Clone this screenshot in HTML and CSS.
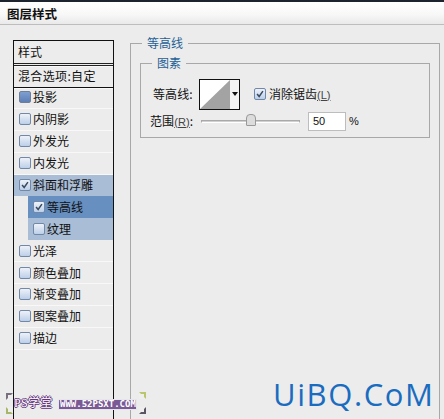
FILE: index.html
```html
<!DOCTYPE html>
<html lang="zh">
<head>
<meta charset="utf-8">
<title>图层样式</title>
<link rel="stylesheet" href="styles.css">
</head>
<body>
<div class="dialog">
  <header class="titlebar">图层样式</header>
  <div class="main">
    <nav class="sidebar">
      <div class="head">样式</div>
      <div class="head blend">混合选项:自定</div>
      <ul class="list">
        <li class="row"><span class="box filled"></span>投影</li>
        <li class="row"><span class="box"></span>内阴影</li>
        <li class="row"><span class="box"></span>外发光</li>
        <li class="row"><span class="box"></span>内发光</li>
        <li class="row soft"><span class="box"><svg viewBox="0 0 12 12"><path d="M2.5 6 L5 9 L9.5 2.5" fill="none" stroke="#3a4a5e" stroke-width="1.8"/></svg></span>斜面和浮雕</li>
        <li class="row sub strong"><span class="box"><svg viewBox="0 0 12 12"><path d="M2.5 6 L5 9 L9.5 2.5" fill="none" stroke="#3a4a5e" stroke-width="1.8"/></svg></span>等高线</li>
        <li class="row sub soft"><span class="box"></span>纹理</li>
        <li class="row"><span class="box"></span>光泽</li>
        <li class="row"><span class="box"></span>颜色叠加</li>
        <li class="row"><span class="box"></span>渐变叠加</li>
        <li class="row"><span class="box"></span>图案叠加</li>
        <li class="row"><span class="box"></span>描边</li>
      </ul>
    </nav>
    <section class="content">
      <fieldset class="outer">
        <legend class="legend">等高线</legend>
        <fieldset class="inner">
          <legend class="legend">图素</legend>
          <div class="line first">
            <span class="label">等高线:</span>
            <div class="picker">
              <svg class="curve" viewBox="0 0 30 29" width="30" height="29"><rect width="30" height="29" fill="#fff"/><path d="M0 29 L30 0 V29Z" fill="#a3a3a3"/></svg>
              <span class="drop"></span>
            </div>
            <span class="box big"><svg viewBox="0 0 12 12"><path d="M2.5 6 L5 9 L9.5 2.5" fill="none" stroke="#3a4a5e" stroke-width="1.8"/></svg></span>
            <span class="check-label">消除锯齿<span class="hot">(L)</span></span>
          </div>
          <div class="line second">
            <span class="label">范围<span class="hot">(R)</span>:</span>
            <div class="slider"><span class="thumb"></span></div>
            <span class="input">50</span>
            <span class="pct">%</span>
          </div>
        </fieldset>
      </fieldset>
    </section>
  </div>
  <div class="mark mark-ps">PS学堂</div>
  <div class="mark mark-url">WWW.52PSXT.COM</div>
  <span class="corner c1"></span><span class="corner c2"></span><span class="corner c3"></span><span class="corner c4"></span>
  <div class="brand">UiBQ.CoM</div>
</div>
</body>
</html>
```
FILE: styles.css
```css
* { box-sizing: border-box; }
html, body { margin: 0; height: 100%; }
body { background: #ececec; overflow: hidden; font: 12px/16px "Noto Sans CJK SC", "Liberation Sans", sans-serif; color: #111; }
.dialog { position: relative; width: 444px; height: 419px; overflow: hidden; display: flex; flex-direction: column; }
.titlebar { height: 25px; padding: 3px 0 0 7px; border-top: 2px solid #1d2430; border-bottom: 1px solid #bdbdbd; background: linear-gradient(#ffffff, #f8f8f8 55%, #e9e9e9); font-size: 12.5px; line-height: 18px; font-weight: 700; color: #111; }
.main { flex: 1; display: flex; padding: 15px 0 0 13px; min-height: 0; }
.sidebar { width: 101px; border: solid #111; border-width: 1px 1px 0 1px; flex: none; }
.head { height: 23px; padding: 3px 0 0 4px; border-bottom: 1px solid #111; box-shadow: 0 1px 0 #f8f8f8; }
.head:first-child { height: 25px; border-bottom: 3px double #222; padding-top: 3px; }
.blend { height: 22px; padding-top: 2px; letter-spacing: .35px; }
.list { margin: -1px 0 0; padding: 0; list-style: none; }
.row { height: 21.9px; display: flex; align-items: center; gap: 2px; padding-left: 5px; border-bottom: 1px solid #f8f8f8; }
.sub { margin-left: 14px; }
.soft { background: #a9bdd6; border-bottom-color: #a9bdd6; }
.strong { background: #678fbf; border-bottom-color: #678fbf; }
.box { width: 12px; height: 12px; flex: none; display: block; border: 1px solid #7288a8; border-radius: 2px; background: linear-gradient(#eef2f9, #bccfe9); }
.box svg { display: block; width: 10px; height: 10px; }
.filled { background: linear-gradient(#7f9fd0, #5c7fb6); border-color: #6f7f98; }
.content { flex: 1; min-width: 0; padding: 0 4px 0 16px; }
fieldset { margin: 0; min-width: 0; border: 1px solid #a8a8a8; }
.outer { height: 500px; margin-top: -5px; padding: 4px 9px 0 9px; border-bottom: 0; }
.inner { height: 83px; padding: 8px 0 0 9px; }
.legend { padding: 0 5px; margin-left: 2px; color: #1f5f95; line-height: 16px; }
.line { display: flex; align-items: center; }
.first { height: 30px; }
.second { height: 20px; margin-top: 2px; }
.label { letter-spacing: .1px; color: #111; }
.first .label { margin-left: 3px; width: 46px; }
.second .label { width: 51px; }
.hot { font-size: 11px; font-family: "Liberation Sans", sans-serif; text-decoration: underline; color: #444; }
.picker { width: 41px; height: 31px; display: flex; border: 1px solid #111; background: #f4f4f4; flex: none; }
.curve { display: block; flex: none; width: 30px; }
.drop { position: relative; flex: 1; }
.drop::after { content: ""; position: absolute; left: 2px; top: 12px; border: 3px solid transparent; border-top: 4px solid #111; border-bottom: 0; }
.big { margin-left: 14px; }
.check-label { margin-left: 3px; }
.slider { position: relative; width: 99px; height: 3px; margin-right: 8px; flex: none; border: solid #a9a9a9; border-width: 1px 1px 0; border-bottom: 1px solid #fff; background: #d0d0d0; }
.thumb { position: absolute; left: 44px; top: -7px; width: 10px; height: 12px; background: #dcdcdc; border: 1px solid #999; border-radius: 4px 4px 1px 1px; }
.input { width: 38px; height: 19px; padding-left: 4px; background: #fff; border: 1px solid #bdbdbd; line-height: 17px; flex: none; font-family: "Liberation Sans", sans-serif; font-size: 11px; }
.pct { margin-left: 3px; font-family: "Liberation Sans", sans-serif; font-size: 11px; }
.mark { position: absolute; white-space: nowrap; }
.mark-ps { left: 14px; top: 396px; font: 12px/15px "Liberation Serif", "Noto Sans CJK SC", serif; color: #fff; letter-spacing: .3px; text-shadow: 1px 0 0 #61307a, -1px 0 0 #61307a, 0 1px 0 #61307a, 0 -1px 0 #61307a; }
.mark-url { left: 58px; top: 399px; height: 11px; width: 79px; padding: 0 1px; background: #7a5a95; border: 1px solid #e8e4ec; font: 700 9px/9px "DejaVu Sans Mono", monospace; color: #fff; overflow: hidden; }
.corner { position: absolute; width: 7px; height: 7px; border: 2px solid #8f8f8f; background: #eee; }
.c1 { left: 6px; top: 393px; border-color: #77707e; border-right-color: transparent; border-bottom-color: transparent; }
.c2 { left: 6px; top: 407px; border-color: #a9b56a; border-right-color: transparent; border-top-color: transparent; }
.c3 { left: 139px; top: 392px; border-color: #bcc56e; border-left-color: transparent; border-bottom-color: transparent; }
.c4 { left: 139px; top: 407px; border-color: #5b5563; border-left-color: transparent; border-top-color: transparent; }
.brand { position: absolute; left: 273px; top: 374px; font: 31px/40px "Open Sans", sans-serif; letter-spacing: 1.6px; color: #1a6cc0; white-space: nowrap; }
```
